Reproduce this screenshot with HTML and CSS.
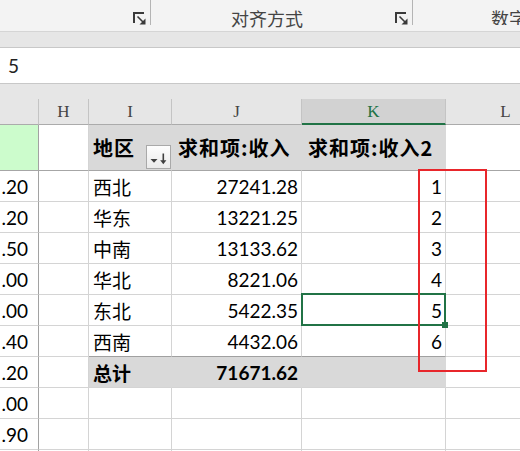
FILE: index.html
```html
<!DOCTYPE html>
<html lang="zh-CN">
<head>
<meta charset="utf-8">
<title>数据透视表</title>
<link rel="stylesheet" href="styles.css">
</head>
<body>
<div class="ribbon">
  <div class="grp g1">
    <svg class="launch" viewBox="0 0 13 13"><path d="M1 11V1H11" fill="none" stroke="#3a3a3a" stroke-width="2"/><path d="M4.5 4.5L10.5 10.5" stroke="#3a3a3a" stroke-width="1.6"/><path d="M12.5 6.5V12.5H6.5Z" fill="#3a3a3a"/></svg>
  </div>
  <div class="grp g2">
    <span class="glabel">对齐方式</span>
    <svg class="launch" viewBox="0 0 13 13"><path d="M1 11V1H11" fill="none" stroke="#3a3a3a" stroke-width="2"/><path d="M4.5 4.5L10.5 10.5" stroke="#3a3a3a" stroke-width="1.6"/><path d="M12.5 6.5V12.5H6.5Z" fill="#3a3a3a"/></svg>
  </div>
  <div class="grp g3"><span class="glabel">数字</span></div>
</div>
<div class="band"></div>
<div class="fbar">5</div>
<div class="band2"></div>
<div class="sheet">
  <div class="c ch ca"></div>
  <div class="c ch">H</div>
  <div class="c ch">I</div>
  <div class="c ch">J</div>
  <div class="c ch sel">K</div>
  <div class="c ch">L</div>

  <div class="c ph ca green"></div>
  <div class="c ph"></div>
  <div class="c ph pg pi">地区<span class="fbtn"><svg viewBox="0 0 23 22" width="23" height="22"><path d="M3.5 13H10.5L7 16.8Z" fill="#404040"/><path d="M16.3 7.5V16" stroke="#404040" stroke-width="1.6"/><path d="M13.2 14.2H19.4L16.3 18.2Z" fill="#404040"/></svg></span></div>
  <div class="c ph pg pj">求和项:收入</div>
  <div class="c ph pg pk">求和项:收入2</div>
  <div class="c ph"></div>

  <div class="c ca a">.20</div><div class="c"></div><div class="c t">西北</div><div class="c n">27241.28</div><div class="c n">1</div><div class="c"></div>
  <div class="c ca a">.20</div><div class="c"></div><div class="c t">华东</div><div class="c n">13221.25</div><div class="c n">2</div><div class="c"></div>
  <div class="c ca a">.50</div><div class="c"></div><div class="c t">中南</div><div class="c n">13133.62</div><div class="c n">3</div><div class="c"></div>
  <div class="c ca a">.00</div><div class="c"></div><div class="c t">华北</div><div class="c n">8221.06</div><div class="c n">4</div><div class="c"></div>
  <div class="c ca a">.00</div><div class="c"></div><div class="c t">东北</div><div class="c n">5422.35</div><div class="c n">5</div><div class="c"></div>
  <div class="c ca a">.40</div><div class="c"></div><div class="c t last">西南</div><div class="c n last">4432.06</div><div class="c n last">6</div><div class="c"></div>
  <div class="c ca a">.20</div><div class="c"></div><div class="c t tot">总计</div><div class="c n tot">71671.62</div><div class="c tot"></div><div class="c"></div>
  <div class="c ca a">.00</div><div class="c"></div><div class="c"></div><div class="c"></div><div class="c"></div><div class="c"></div>
  <div class="c ca a">.90</div><div class="c"></div><div class="c"></div><div class="c"></div><div class="c"></div><div class="c"></div>
  <div class="c ca a"></div><div class="c"></div><div class="c"></div><div class="c"></div><div class="c"></div><div class="c"></div>

  <div class="selbox"></div>
  <div class="handle"></div>
  <div class="redbox"></div>
</div>
</body>
</html>
```
FILE: styles.css
```css
* { box-sizing: border-box; }
html, body {
  margin: 0;
  padding: 0;
  width: 520px;
  height: 451px;
  overflow: hidden;
  background: #ffffff;
}
body {
  font-family: "Lato", "Noto Sans CJK SC", sans-serif;
  color: #000;
}

/* ribbon */
.ribbon {
  display: flex;
  height: 32px;
  background: #f3f3f3;
  border-bottom: 1px solid #d5d5d5;
  overflow: hidden;
}
.grp {
  display: flex;
  align-items: flex-start;
  height: 25px;
  flex: none;
  border-right: 1px solid #b4b4b4;
}
.g1 { width: 151px; justify-content: flex-end; padding-right: 4px; }
.g2 { width: 262px; padding-right: 4px; }
.g3 { flex: 1; min-width: 0; border-right: none; overflow: hidden; }
.glabel {
  margin-top: 5px;
  line-height: 26px;
  font-size: 18px;
  color: #444;
  font-family: "Noto Sans CJK SC", sans-serif;
  white-space: nowrap;
}
.g2 .glabel { margin-left: 80px; }
.g3 .glabel { margin-left: 78px; }
.launch {
  display: block;
  width: 13px;
  height: 13px;
  margin-top: 12px;
  margin-left: auto;
}

.band {
  height: 16px;
  background: #e6e6e6;
  border-bottom: 1px solid #c8c8c8;
}
.fbar {
  height: 36px;
  line-height: 35px;
  padding-left: 8px;
  font-size: 19px;
  color: #222;
  border-bottom: 1px solid #c8c8c8;
}
.band2 {
  height: 15px;
  background: #e6e6e6;
}

/* sheet */
.sheet {
  position: relative;
  display: grid;
  grid-template-columns: 39px 50px 83px 130px 144px 120px;
  grid-template-rows: 26px 46px repeat(10, 31px);
  width: 520px;
  height: 352px;
  overflow: hidden;
}
.c {
  display: flex;
  align-items: center;
  overflow: hidden;
  white-space: nowrap;
  font-size: 19px;
  border-right: 1px solid #d4d4d4;
  border-bottom: 1px solid #d4d4d4;
}
.ca { border-right-color: #a2a2a2; }
.ch {
  justify-content: center;
  background: #e6e6e6;
  font-family: "Liberation Serif", serif;
  font-size: 17px;
  color: #444;
  border-right-color: #c4c4c4;
  border-bottom-color: #ababab;
  padding-top: 1px;
}
.ch.sel {
  background: #d2d2d2;
  color: #217346;
  border-bottom: 2px solid #217346;
}
.ph { border-bottom-color: #a6a6a6; }
.green { background: #ccfccc; }
.pg {
  background: #d9d9d9;
  border-right-color: #d9d9d9;
  font-family: "Noto Sans CJK SC", sans-serif;
  font-weight: 700;
  font-size: 20px;
  letter-spacing: 1px;
}
.pi { padding-left: 4px; }
.pj, .pk { padding-left: 6px; }
.fbtn {
  display: flex;
  align-self: flex-end;
  margin-left: auto;
  margin-bottom: 1px;
  width: 25px;
  height: 24px;
  border: 1px solid #a9a9a9;
  background: linear-gradient(#fdfdfd, #ebebeb);
  letter-spacing: 0;
}
.a { justify-content: flex-end; padding-right: 10px; }
.t { padding-left: 4px; }
.n { justify-content: flex-end; padding-right: 3px; }
.last { border-bottom-color: #a0a0a0; }
.tot {
  background: #d9d9d9;
  border-right-color: #d9d9d9;
  font-weight: 700;
}

/* overlays */
.selbox {
  position: absolute;
  left: 301px;
  top: 194px;
  width: 145px;
  height: 33px;
  border: 2px solid #217346;
}
.handle {
  position: absolute;
  left: 442px;
  top: 223px;
  width: 6px;
  height: 6px;
  background: #217346;
}
.redbox {
  position: absolute;
  left: 418px;
  top: 70px;
  width: 69px;
  height: 203px;
  border: 2px solid #e8262b;
}
```
